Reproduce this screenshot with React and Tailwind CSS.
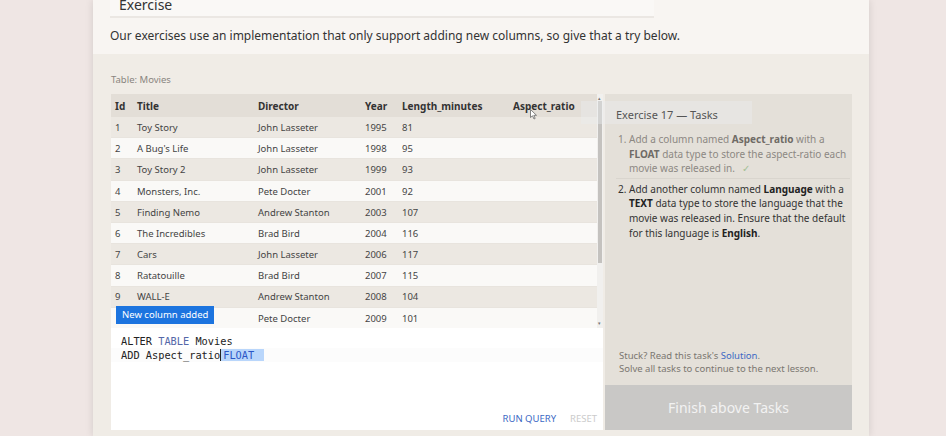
import React from 'react';

const movies = [
    [1, 'Toy Story', 'John Lasseter', 1995, 81],
    [2, "A Bug's Life", 'John Lasseter', 1998, 95],
    [3, 'Toy Story 2', 'John Lasseter', 1999, 93],
    [4, 'Monsters, Inc.', 'Pete Docter', 2001, 92],
    [5, 'Finding Nemo', 'Andrew Stanton', 2003, 107],
    [6, 'The Incredibles', 'Brad Bird', 2004, 116],
    [7, 'Cars', 'John Lasseter', 2006, 117],
    [8, 'Ratatouille', 'Brad Bird', 2007, 115],
    [9, 'WALL-E', 'Andrew Stanton', 2008, 104],
    [10, 'Up', 'Pete Docter', 2009, 101],
];

const cols = ['w-[22px]', 'w-[121px]', 'w-[107px]', 'w-[37px]', 'w-[111px]', 'w-[89px]'];

const App = () => {
    return (
        <div className="flex h-[436px] w-[946px] overflow-hidden bg-[#efe6e4] font-['Noto_Sans',sans-serif]">
            <div className="w-[93px] shrink-0" />

            {/* MAIN COLUMN */}
            <div className="relative flex w-[776px] shrink-0 flex-col bg-[#f0ece6] shadow-[0_0_8px_rgba(0,0,0,0.12)]">
                {/* INTRO */}
                <div className="h-[54px] bg-[#f8f5f2] px-[17px]">
                    <div className="h-[18px] w-[544px] border-b-2 border-[#ebe7e3] bg-[#faf8f6] pl-[9px]">
                        <p className="text-[14px] leading-[10px] text-[#333]">Exercise</p>
                    </div>
                    <p className="mt-[10px] text-[12px] leading-[16px] text-[#333]">
                        Our exercises use an implementation that only support adding new columns, so give that a try below.
                    </p>
                </div>

                {/* EXERCISE AREA */}
                <div className="flex-1 pl-[18px] pr-[17px]">
                    <p className="mt-[19px] h-[21px] text-[9.5px] leading-[14px] text-[#8a8580]">Table: Movies</p>

                    <div className="flex gap-[2px]">
                        {/* LEFT: TABLE + EDITOR */}
                        <div className="w-[492px] shrink-0">
                            <div className="relative flex h-[234px] overflow-hidden">
                                <div className="w-[486px] text-[9.5px] text-[#444]">
                                    <div className="flex h-[23px] items-center bg-[#e3ded7] pt-[1px] text-[10px] font-bold text-[#333]">
                                        {['Id', 'Title', 'Director', 'Year', 'Length_minutes', 'Aspect_ratio'].map((h, i) => (
                                            <div key={h} className={`${cols[i]} shrink-0 pl-[4px]`}>{h}</div>
                                        ))}
                                    </div>
                                    {movies.map((m, r) => (
                                        <div
                                            key={m[0]}
                                            className={`flex h-[21.2px] items-center border-b border-[#e8e4de] pt-[2px] ${r % 2 === 0 ? 'bg-[#ece8e2]' : 'bg-[#faf9f7]'}`}
                                        >
                                            {[...m, ''].map((v, i) => (
                                                <div key={i} className={`${cols[i]} shrink-0 pl-[4px] ${r === 9 && i < 2 ? 'invisible' : ''}`}>{v}</div>
                                            ))}
                                        </div>
                                    ))}
                                </div>
                                {/* scrollbar */}
                                <div className="relative w-[6px] bg-[#f1f0ee]">
                                    <div className="absolute left-[1px] top-[2px] text-[5px] leading-none text-[#777]">▴</div>
                                    <div className="absolute left-[1px] right-[1px] top-[7px] h-[162px] bg-[#c4c2bf]" />
                                    <div className="absolute bottom-[2px] left-[1px] text-[5px] leading-none text-[#777]">▾</div>
                                </div>

                                <div className="absolute left-[5px] top-[212px] flex h-[18px] items-center bg-[#1c74df] px-[6px] text-[9.5px] text-white">
                                    New column added
                                </div>

                                {/* mouse pointer */}
                                <svg className="absolute left-[419px] top-[15px]" width="8" height="11" viewBox="0 0 8 11">
                                    <path d="M0.5 0.5 L0.5 8.5 L2.5 6.8 L4 10 L5.2 9.4 L3.8 6.3 L6.5 6.3 Z" fill="#fff" stroke="#666" strokeWidth="0.8" />
                                </svg>
                            </div>

                            {/* EDITOR */}
                            <div className="relative h-[102px] bg-white pt-[6px] font-['DejaVu_Sans_Mono',monospace] text-[10.3px] leading-[14px] text-[#222]">
                                <div className="pl-[10px]">
                                    ALTER <span className="text-[#5567a8]">TABLE</span> Movies
                                </div>
                                <div className="bg-[#fcfcfc] pl-[10px]">
                                    ADD Aspect_ratio
                                    <span className="border-l border-[#222] bg-[#b9d6fb] pl-[2px] pr-[10px] text-[#2a56c6]">FLOAT</span>
                                </div>
                                <div className="absolute bottom-[5px] right-[6px] flex gap-[14px] font-['Noto_Sans',sans-serif] text-[9.5px] leading-[12px]">
                                    <span className="text-[#3c69c4]">RUN QUERY</span>
                                    <span className="text-[#cbcbcb]">RESET</span>
                                </div>
                            </div>
                        </div>

                        {/* RIGHT: TASKS */}
                        <div className="relative flex h-[336px] w-[247px] shrink-0 flex-col bg-[#e4e0d9]">
                            <div className="absolute -left-[24px] top-[7px] h-[23px] w-[171px] bg-[#eceef0]/40" />
                            <div className="relative pl-[11px] pr-[2px] pt-[14px]">
                                <p className="text-[11px] leading-[14px] text-[#555]">Exercise 17 — Tasks</p>
                                <ol className="mt-[10px] whitespace-nowrap text-[10px] leading-[14.6px]">
                                    <li className="flex gap-[2px] border-b border-[#d9d5ce] pb-[2px] text-[#8c8883]">
                                        <span className="w-[11px] shrink-0 pl-[2px]">1.</span>
                                        <span>
                                            Add a column named <b className="text-[#6f6b66]">Aspect_ratio</b> with a<br />
                                            <b className="text-[#6f6b66]">FLOAT</b> data type to store the aspect-ratio each<br />
                                            movie was released in. <span className="ml-[4px] text-[#a3bf94]">✓</span>
                                        </span>
                                    </li>
                                    <li className="mt-[3px] flex gap-[2px] text-[#333]">
                                        <span className="w-[11px] shrink-0 pl-[2px]">2.</span>
                                        <span>
                                            Add another column named <b className="text-[#222]">Language</b> with a<br />
                                            <b className="text-[#222]">TEXT</b> data type to store the language that the<br />
                                            movie was released in. Ensure that the default<br />
                                            for this language is <b className="text-[#222]">English</b>.
                                        </span>
                                    </li>
                                </ol>
                            </div>
                            <div className="mt-auto px-[14px] pb-[10px] text-[9.5px] leading-[13px] text-[#7a7670]">
                                <p>Stuck? Read this task's <span className="text-[#3c69c4]">Solution</span>.</p>
                                <p>Solve all tasks to continue to the next lesson.</p>
                            </div>
                            <div className="flex h-[45px] items-center justify-center bg-[#c9c8c6] text-[14px] text-[#f2f2f2]">
                                Finish above Tasks
                            </div>
                        </div>
                    </div>
                </div>
            </div>

            <div className="flex-1" />
        </div>
    );
};

export default App;
